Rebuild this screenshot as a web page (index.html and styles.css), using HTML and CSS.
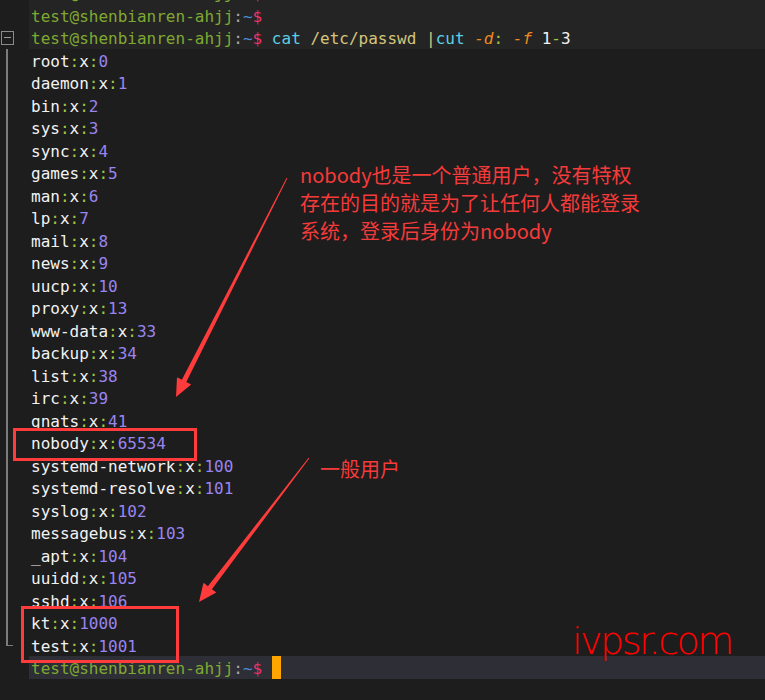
FILE: index.html
```html
<!DOCTYPE html>
<html lang="en">
<head>
    <meta charset="UTF-8">
    <title>cat /etc/passwd</title>
    <link rel="stylesheet" href="styles.css">
</head>
<body>

    <div class="term">
        <!-- previous prompts -->
        <div class="line old"><div class="gutter"></div><div class="code"><span class="u">test@shenbianren-ahjj</span><span class="c">:</span><span class="t">~</span><span class="d">$</span></div></div>
        <div class="line old"><div class="gutter"></div><div class="code"><span class="u">test@shenbianren-ahjj</span><span class="c">:</span><span class="t">~</span><span class="d">$</span></div></div>
        <div class="line old"><div class="gutter"><span class="fold-box"></span></div><div class="code"><span class="u">test@shenbianren-ahjj</span><span class="c">:</span><span class="t">~</span><span class="d">$</span> <span class="cmd">cat</span> <span class="path">/etc/passwd</span> <span class="path">|</span><span class="cmd">cut</span> <span class="opt">-d</span><span class="sep">:</span> <span class="opt">-f</span> 1<span class="sep">-</span>3</div></div>

        <!-- output -->
        <div class="line mid"><div class="gutter"></div><div class="code">root<span class="sep">:</span>x<span class="sep">:</span><span class="num">0</span></div></div>
        <div class="line mid"><div class="gutter"></div><div class="code">daemon<span class="sep">:</span>x<span class="sep">:</span><span class="num">1</span></div></div>
        <div class="line mid"><div class="gutter"></div><div class="code">bin<span class="sep">:</span>x<span class="sep">:</span><span class="num">2</span></div></div>
        <div class="line mid"><div class="gutter"></div><div class="code">sys<span class="sep">:</span>x<span class="sep">:</span><span class="num">3</span></div></div>
        <div class="line mid"><div class="gutter"></div><div class="code">sync<span class="sep">:</span>x<span class="sep">:</span><span class="num">4</span></div></div>
        <div class="line mid"><div class="gutter"></div><div class="code">games<span class="sep">:</span>x<span class="sep">:</span><span class="num">5</span></div></div>
        <div class="line mid"><div class="gutter"></div><div class="code">man<span class="sep">:</span>x<span class="sep">:</span><span class="num">6</span></div></div>
        <div class="line mid"><div class="gutter"></div><div class="code">lp<span class="sep">:</span>x<span class="sep">:</span><span class="num">7</span></div></div>
        <div class="line mid"><div class="gutter"></div><div class="code">mail<span class="sep">:</span>x<span class="sep">:</span><span class="num">8</span></div></div>
        <div class="line mid"><div class="gutter"></div><div class="code">news<span class="sep">:</span>x<span class="sep">:</span><span class="num">9</span></div></div>
        <div class="line mid"><div class="gutter"></div><div class="code">uucp<span class="sep">:</span>x<span class="sep">:</span><span class="num">10</span></div></div>
        <div class="line mid"><div class="gutter"></div><div class="code">proxy<span class="sep">:</span>x<span class="sep">:</span><span class="num">13</span></div></div>
        <div class="line mid"><div class="gutter"></div><div class="code">www-data<span class="sep">:</span>x<span class="sep">:</span><span class="num">33</span></div></div>
        <div class="line mid"><div class="gutter"></div><div class="code">backup<span class="sep">:</span>x<span class="sep">:</span><span class="num">34</span></div></div>
        <div class="line mid"><div class="gutter"></div><div class="code">list<span class="sep">:</span>x<span class="sep">:</span><span class="num">38</span></div></div>
        <div class="line mid"><div class="gutter"></div><div class="code">irc<span class="sep">:</span>x<span class="sep">:</span><span class="num">39</span></div></div>
        <div class="line mid"><div class="gutter"></div><div class="code">gnats<span class="sep">:</span>x<span class="sep">:</span><span class="num">41</span></div></div>
        <div class="line mid"><div class="gutter"></div><div class="code">nobody<span class="sep">:</span>x<span class="sep">:</span><span class="num">65534</span></div></div>
        <div class="line mid"><div class="gutter"></div><div class="code">systemd-network<span class="sep">:</span>x<span class="sep">:</span><span class="num">100</span></div></div>
        <div class="line mid"><div class="gutter"></div><div class="code">systemd-resolve<span class="sep">:</span>x<span class="sep">:</span><span class="num">101</span></div></div>
        <div class="line mid"><div class="gutter"></div><div class="code">syslog<span class="sep">:</span>x<span class="sep">:</span><span class="num">102</span></div></div>
        <div class="line mid"><div class="gutter"></div><div class="code">messagebus<span class="sep">:</span>x<span class="sep">:</span><span class="num">103</span></div></div>
        <div class="line mid"><div class="gutter"></div><div class="code">_apt<span class="sep">:</span>x<span class="sep">:</span><span class="num">104</span></div></div>
        <div class="line mid"><div class="gutter"></div><div class="code">uuidd<span class="sep">:</span>x<span class="sep">:</span><span class="num">105</span></div></div>
        <div class="line mid"><div class="gutter"></div><div class="code">sshd<span class="sep">:</span>x<span class="sep">:</span><span class="num">106</span></div></div>
        <div class="line mid"><div class="gutter"></div><div class="code">kt<span class="sep">:</span>x<span class="sep">:</span><span class="num">1000</span></div></div>
        <div class="line end"><div class="gutter"></div><div class="code">test<span class="sep">:</span>x<span class="sep">:</span><span class="num">1001</span></div></div>

        <!-- current prompt -->
        <div class="line current"><div class="gutter"></div><div class="code"><span class="u">test@shenbianren-ahjj</span><span class="c">:</span><span class="t">~</span><span class="d">$</span> <span class="cursor"> </span></div></div>
    </div>

    <!-- annotations drawn over the screenshot -->
    <div class="mark mark-nobody"></div>
    <div class="mark mark-users"></div>

    <p class="note note-nobody">nobody也是一个普通用户，没有特权<br>存在的目的就是为了让任何人都能登录<br>系统，登录后身份为nobody</p>
    <p class="note note-users">一般用户</p>

    <svg class="arrows" width="765" height="700" viewBox="0 0 765 700">
        <polygon points="287.4,178.2 186.3,382 191.2,384.5 176,397 177,377.3 181.9,379.8 286.6,177.8"/>
        <polygon points="309.4,458.3 211.9,589.2 216.3,592.6 199,602 203.5,582.8 207.9,586.2 308.6,457.7"/>
    </svg>

    <div class="watermark">ivpsr.com</div>

</body>
</html>
```

FILE: styles.css
```css
body {
    margin: 0;
    background-color: #1d1d1d;
    width: 765px;
    height: 700px;
    overflow: hidden;
    position: relative;
}
.term {
    margin-top: -18.75px;
    font-family: "DejaVu Sans Mono", monospace;
    font-size: 16px;
    color: #f2f2f2;
}
.line {
    display: flex;
    height: 22.5px;
    line-height: 22.5px;
}
.gutter {
    width: 29px;
    flex: none;
    position: relative;
}
.code {
    flex: 1;
    box-sizing: border-box;
    padding-top: 2px;
    padding-left: 2px;
    white-space: pre;
}
.old .code {
    background-color: #242424;
}
.current .code {
    background-color: #2e2e36;
}

/* fold markers */
.fold-box {
    position: absolute;
    left: 1px;
    top: 4.5px;
    width: 11px;
    height: 12px;
    border: 1px solid #8a8a8a;
}
.fold-box::after {
    content: "";
    position: absolute;
    left: 2px;
    right: 2px;
    top: 5.5px;
    height: 1px;
    background: #9a9a9a;
}
.mid .gutter::before,
.end .gutter::before {
    content: "";
    position: absolute;
    left: 6px;
    top: 0;
    bottom: 0;
    width: 1.5px;
    background: #7c7c7c;
}
.end .gutter::before {
    bottom: 11px;
}
.end .gutter::after {
    content: "";
    position: absolute;
    left: 6px;
    top: 11px;
    width: 7px;
    height: 1.5px;
    background: #7c7c7c;
}

/* syntax colours */
.u { color: #7fa832; }
.c { color: #a8a8a8; }
.t { color: #4d8cd6; }
.d { color: #e8336c; }
.cmd { color: #5ccfe6; }
.path { color: #d6c57c; }
.opt { color: #ef8a22; font-style: italic; }
.sep { color: #9fc63f; }
.num { color: #9a84f0; }
.cursor {
    display: inline-block;
    width: 9.6px;
    height: 22.5px;
    margin-top: -2px;
    vertical-align: top;
    background-color: #ffa500;
}

/* annotations */
.mark {
    position: absolute;
    border: 3px solid #ff3b3b;
}
.mark-nobody {
    left: 13px;
    top: 428px;
    width: 178px;
    height: 27px;
}
.mark-users {
    left: 21px;
    top: 606px;
    width: 152px;
    height: 51px;
}
.note {
    position: absolute;
    margin: 0;
    font-family: "Noto Sans CJK SC", sans-serif;
    font-size: 20px;
    line-height: 28px;
    color: #f53a3a;
}
.note-nobody {
    left: 300px;
    top: 161px;
}
.note-users {
    left: 320px;
    top: 455px;
}
.arrows {
    position: absolute;
    left: 0;
    top: 0;
    fill: #ff3b3b;
}
.watermark {
    position: absolute;
    left: 572px;
    top: 621px;
    font-family: "DejaVu Sans", sans-serif;
    font-weight: 200;
    font-stretch: condensed;
    font-size: 38px;
    line-height: 40px;
    letter-spacing: -2.5px;
    color: #ff0000;
}
```
